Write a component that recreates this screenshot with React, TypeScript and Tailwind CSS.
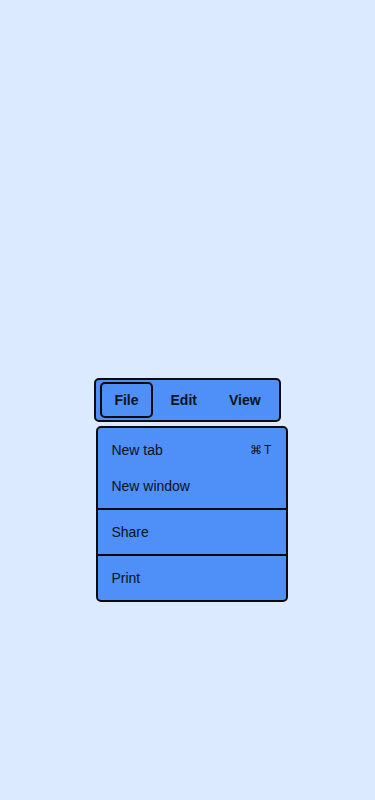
import React from 'react';

const groups: { label: string; shortcut?: string[] }[][] = [
  [{ label: 'New tab', shortcut: ['⌘', 'T'] }, { label: 'New window' }],
  [{ label: 'Share' }],
  [{ label: 'Print' }],
];

export default function App() {
  return (
    <div
      className="min-h-screen bg-[#dbeafe] flex items-center justify-center text-[#0b1220]"
      style={{ fontFamily: '"Liberation Sans", Arial, sans-serif' }}
    >
      <div className="relative">
        <div className="flex gap-1 px-1 py-0.5 bg-[#4f8ff8] border-2 border-[#0a0a0a] rounded-[5px]">
          <button className="px-3 py-1.5 text-sm leading-5 font-bold border-2 border-[#0a0a0a] rounded-[5px]">
            File
          </button>
          <button className="px-3 py-1.5 text-sm leading-5 font-bold border-2 border-transparent rounded-[5px]">
            Edit
          </button>
          <button className="px-3 py-1.5 text-sm leading-5 font-bold border-2 border-transparent rounded-[5px]">
            View
          </button>
        </div>

        <div className="absolute left-0.5 top-full mt-1 w-48 bg-[#4f8ff8] border-2 border-[#0a0a0a] rounded-[5px]">
          {groups.map((group, i) => (
            <div key={i} className={i > 0 ? 'py-1 border-t-2 border-[#0a0a0a]' : 'py-1'}>
              {group.map((item) => (
                <div key={item.label} className="h-9 pl-[13px] pr-[15px] flex items-center justify-between text-sm">
                  <span>{item.label}</span>
                  {item.shortcut && (
                    <span className="flex gap-[2px] text-xs">
                      {item.shortcut.map((k) => (
                        <span key={k}>{k}</span>
                      ))}
                    </span>
                  )}
                </div>
              ))}
            </div>
          ))}
        </div>
      </div>
    </div>
  );
}
